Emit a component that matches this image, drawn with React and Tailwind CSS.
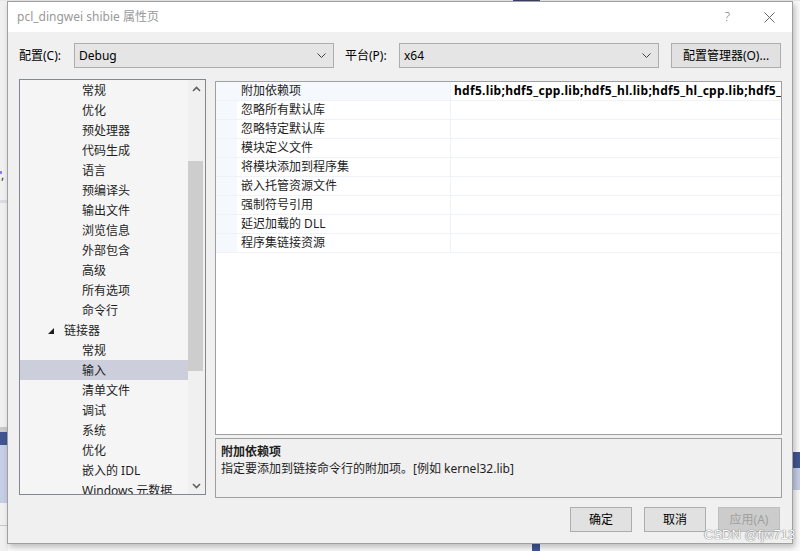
import React from "react";

const FONT = { fontFamily: '"Noto Sans", "Noto Sans CJK SC", sans-serif' };

const treeItems = [
  { label: "常规", level: 2 },
  { label: "优化", level: 2 },
  { label: "预处理器", level: 2 },
  { label: "代码生成", level: 2 },
  { label: "语言", level: 2 },
  { label: "预编译头", level: 2 },
  { label: "输出文件", level: 2 },
  { label: "浏览信息", level: 2 },
  { label: "外部包含", level: 2 },
  { label: "高级", level: 2 },
  { label: "所有选项", level: 2 },
  { label: "命令行", level: 2 },
  { label: "链接器", level: 1, open: true },
  { label: "常规", level: 2 },
  { label: "输入", level: 2, selected: true },
  { label: "清单文件", level: 2 },
  { label: "调试", level: 2 },
  { label: "系统", level: 2 },
  { label: "优化", level: 2 },
  { label: "嵌入的 IDL", level: 2 },
  { label: "Windows 元数据", level: 2 },
];

const props = [
  { name: "附加依赖项", value: "hdf5.lib;hdf5_cpp.lib;hdf5_hl.lib;hdf5_hl_cpp.lib;hdf5_tools.lib;hdf5_hl_fortran.lib" },
  { name: "忽略所有默认库" },
  { name: "忽略特定默认库" },
  { name: "模块定义文件" },
  { name: "将模块添加到程序集" },
  { name: "嵌入托管资源文件" },
  { name: "强制符号引用" },
  { name: "延迟加载的 DLL" },
  { name: "程序集链接资源" },
];

function Chevron({ up }) {
  return (
    <svg width="9" height="6" viewBox="0 0 9 6" className="block">
      <polyline
        points={up ? "1,5 4.5,1.5 8,5" : "1,1 4.5,4.5 8,1"}
        fill="none"
        stroke="#606060"
        strokeWidth="1.6"
      />
    </svg>
  );
}

function Combo({ value, width }) {
  return (
    <div
      className="shrink-0 h-[25px] border border-[#adadad] bg-[#e5e5e5] flex items-center justify-between pl-[4px] pr-[7px] text-[12px] text-black"
      style={{ width }}
    >
      <span>{value}</span>
      <svg width="9" height="5" viewBox="0 0 9 5">
        <polyline points="0.5,0.5 4.5,4.5 8.5,0.5" fill="none" stroke="#404040" strokeWidth="1" />
      </svg>
    </div>
  );
}

function Button({ children, disabled, width = "w-[62px]" }) {
  return (
    <div
      className={`${width} shrink-0 h-[25px] flex items-center justify-center border text-[12px] whitespace-nowrap ${
        disabled
          ? "bg-[#cccccc] border-[#bfbfbf] text-[#a0a0a0]"
          : "bg-[#e1e1e1] border-[#adadad] text-black"
      }`}
    >
      {children}
    </div>
  );
}

export default function App() {
  return (
    <div className="relative w-[800px] h-[551px] overflow-hidden bg-[#fafafa]" style={FONT}>
      {/* background window bits */}
      <div className="absolute left-0 top-0 w-[8px] h-[551px] bg-[#f0f0f0]" />
      <div className="absolute left-0 top-[171px] w-[2px] h-[3px] bg-[#8a7cf0]" />
      <div className="absolute left-[1px] top-[168px] text-[12px] leading-[14px] text-[#333]">,</div>
      <div className="absolute left-0 top-[200px] w-[7px] h-[3px] bg-[#dcdce6]" />
      <div className="absolute left-0 top-[427px] w-[8px] h-[5px] bg-[#c9c9c9]" />
      <div className="absolute left-0 top-[432px] w-[8px] h-[13px] bg-[#415593]" />
      <div className="absolute left-0 top-[445px] w-[8px] h-[58px] bg-[#c6cde6]" />
      <div className="absolute left-0 top-[525px] w-[8px] h-[1px] bg-[#c8c8c8]" />
      <div className="absolute left-[792px] top-[452px] w-[8px] h-[16px] bg-[#415593]" />
      <div className="absolute left-[792px] top-[468px] w-[8px] h-[22px] bg-[#c6cde6]" />
      <div className="absolute left-[0px] top-[0px] w-[800px] h-[1px] bg-[#e8e8e8]" />
      <div className="absolute left-[513px] top-0 w-[27px] h-[1px] bg-[#3a3f66]" />
      <div className="absolute left-[532px] top-[543px] w-[8px] h-[8px] bg-[#415593]" />

      {/* dialog window */}
      <div className="absolute left-[7px] top-[1px] w-[786px] h-[543px] border border-[#a0a0a0] bg-[#f0f0f0] flex flex-col shadow-[2px_3px_6px_rgba(0,0,0,0.25)]">
        {/* title bar */}
        <div className="h-[30px] bg-white flex items-center justify-between pl-[9px] pr-[17px]">
          <span className="text-[12px] text-[#999999]">pcl_dingwei shibie 属性页</span>
          <div className="flex items-center gap-[34px]">
            <span className="text-[13px] text-[#777777] font-light">?</span>
            <svg width="11" height="11" viewBox="0 0 11 11">
              <line x1="0.5" y1="0.5" x2="10.5" y2="10.5" stroke="#666" strokeWidth="1" />
              <line x1="10.5" y1="0.5" x2="0.5" y2="10.5" stroke="#666" strokeWidth="1" />
            </svg>
          </div>
        </div>

        {/* config row */}
        <div className="mt-[11px] flex items-center pl-[11px] pr-[12px] h-[25px]">
          <span className="text-[12px] text-black w-[55px] shrink-0">配置(C):</span>
          <Combo value="Debug" width="260px" />
          <span className="text-[12px] text-black ml-[11px] w-[54px] shrink-0">平台(P):</span>
          <Combo value="x64" width="260px" />
          <div className="ml-[12px]">
            <Button width="w-[110px]">配置管理器(O)...</Button>
          </div>
        </div>

        {/* content */}
        <div className="mt-[11px] flex pl-[11px] pr-[10px]">
          {/* tree */}
          <div className="shrink-0 w-[187px] h-[416px] border border-[#828790] bg-[#f5f5f5] flex">
            <div className="flex-1 min-w-0 overflow-hidden">
              {treeItems.map((it, i) => (
                <div
                  key={i}
                  className={`h-[20px] flex items-center pt-[1px] text-[12px] text-[#1e1e1e] whitespace-nowrap ${
                    it.selected ? "bg-[#cccedb]" : ""
                  } ${it.level === 1 ? "pl-[28px]" : "pl-[62px]"}`}
                >
                  {it.open && (
                    <svg width="6" height="6" viewBox="0 0 6 6" className="mr-[10px]">
                      <polygon points="6,0 6,6 0,6" fill="#1e1e1e" />
                    </svg>
                  )}
                  {it.label}
                </div>
              ))}
            </div>
            <div className="shrink-0 w-[17px] bg-[#f0f0f0] flex flex-col items-center">
              <div className="h-[17px] flex items-center justify-center">
                <Chevron up />
              </div>
              <div className="flex-1 w-full">
                <div className="mt-[64px] w-[15px] h-[210px] bg-[#cdcdcd]" />
              </div>
              <div className="h-[17px] flex items-center justify-center">
                <Chevron />
              </div>
            </div>
          </div>

          {/* right column */}
          <div className="ml-[9px] flex-1 min-w-0 flex flex-col pt-[2px]">
            <div className="h-[354px] border border-[#a0a0a0] bg-white overflow-hidden">
              {props.map((p, i) => (
                <div key={i} className="h-[19px] flex border-b border-[#eff2f7]">
                  <div className="shrink-0 w-[21px] bg-[#f5f8fc]" />
                  <div
                    className={`shrink-0 w-[214px] flex items-center pl-[4px] text-[12px] text-[#1e1e1e] border-r border-[#eff2f7] ${
                      i === 0 ? "bg-[#f5f8fc]" : ""
                    }`}
                  >
                    {p.name}
                  </div>
                  <div className="flex-1 min-w-0 flex items-center pl-[3px] text-[12px] font-bold tracking-[0.3px] text-black whitespace-nowrap overflow-hidden">
                    {p.value}
                  </div>
                </div>
              ))}
            </div>
            <div className="mt-[3px] h-[60px] border border-[#a0a0a0] bg-[#f0f0f0] px-[5px] pt-[4px] text-[12px] text-[#1e1e1e] leading-[17px]">
              <div className="font-bold">附加依赖项</div>
              <div>指定要添加到链接命令行的附加项。[例如 kernel32.lib]</div>
            </div>
          </div>
        </div>

        {/* buttons */}
        <div className="mt-[9px] flex justify-end gap-[12px] pr-[12px]">
          <Button>确定</Button>
          <Button>取消</Button>
          <Button disabled>应用(A)</Button>
        </div>
      </div>

      {/* watermark */}
      <div
        className="absolute left-[704px] top-[527px] text-[13px] leading-[15px] text-white whitespace-nowrap"
        style={{ fontFamily: '"Liberation Sans", sans-serif', textShadow: "0 0 1px #707070, 0 0 1px #707070" }}
      >
        CSDN @fjw713
      </div>
    </div>
  );
}
